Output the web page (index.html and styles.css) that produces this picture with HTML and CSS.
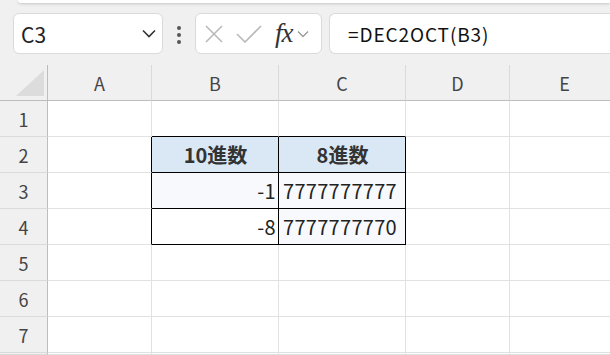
FILE: index.html
```html
<!DOCTYPE html>
<html lang="ja">
<head>
    <meta charset="UTF-8">
    <title>DEC2OCT</title>
    <link rel="stylesheet" href="styles.css">
</head>
<body>

    <div class="ribbon-edge"></div>

    <div class="toolbar">
        <div class="name-box">
            <span>C3</span>
            <svg width="14" height="9" viewBox="0 0 14 9"><path d="M1 1.5 L7 7.5 L13 1.5" fill="none" stroke="#333" stroke-width="1.6"/></svg>
        </div>
        <div class="dots"><i></i><i></i><i></i></div>
        <div class="fn-box">
            <svg width="20" height="20" viewBox="0 0 20 20"><path d="M2 2 L18 18 M18 2 L2 18" fill="none" stroke="#b9b9b9" stroke-width="1.6"/></svg>
            <svg width="26" height="18" viewBox="0 0 26 18"><path d="M1 9 L9 17 L25 1" fill="none" stroke="#b9b9b9" stroke-width="1.6"/></svg>
            <span class="fx">fx</span>
            <svg width="12" height="8" viewBox="0 0 12 8"><path d="M1 1.5 L6 6.5 L11 1.5" fill="none" stroke="#9a9a9a" stroke-width="1.3"/></svg>
        </div>
        <div class="formula">=DEC2OCT(B3)</div>
    </div>

    <div class="sheet">
        <div class="corner"><div class="tri"></div></div>
        <div class="col-head">A</div>
        <div class="col-head">B</div>
        <div class="col-head">C</div>
        <div class="col-head">D</div>
        <div class="col-head">E</div>

        <div class="row-head">1</div>
        <div class="cell"></div>
        <div class="cell edge-b"></div>
        <div class="cell edge-b"></div>
        <div class="cell"></div>
        <div class="cell"></div>

        <div class="row-head">2</div>
        <div class="cell edge-r"></div>
        <div class="cell tb head">10進数</div>
        <div class="cell tb head">8進数</div>
        <div class="cell"></div>
        <div class="cell"></div>

        <div class="row-head">3</div>
        <div class="cell edge-r"></div>
        <div class="cell tb tint num">-1</div>
        <div class="cell tb tint">7777777777</div>
        <div class="cell"></div>
        <div class="cell"></div>

        <div class="row-head">4</div>
        <div class="cell edge-r"></div>
        <div class="cell tb num">-8</div>
        <div class="cell tb tint">7777777770</div>
        <div class="cell"></div>
        <div class="cell"></div>

        <div class="row-head">5</div>
        <div class="cell"></div>
        <div class="cell"></div>
        <div class="cell"></div>
        <div class="cell"></div>
        <div class="cell"></div>

        <div class="row-head">6</div>
        <div class="cell"></div>
        <div class="cell"></div>
        <div class="cell"></div>
        <div class="cell"></div>
        <div class="cell"></div>

        <div class="row-head">7</div>
        <div class="cell"></div>
        <div class="cell"></div>
        <div class="cell"></div>
        <div class="cell"></div>
        <div class="cell"></div>

        <div class="row-head"></div>
        <div class="cell"></div>
        <div class="cell"></div>
        <div class="cell"></div>
        <div class="cell"></div>
        <div class="cell"></div>
    </div>

</body>
</html>
```

FILE: styles.css
```css
* {
    box-sizing: border-box;
}
body {
    margin: 0;
    width: 610px;
    height: 355px;
    overflow: hidden;
    background-color: #f0f0f0;
    font-family: "Noto Sans CJK JP", "Noto Sans", sans-serif;
    color: #222;
}
.ribbon-edge {
    height: 3px;
    margin-left: 18px;
    background-color: #fff;
    border-bottom-left-radius: 6px;
    box-shadow: 0 1px 3px rgba(0, 0, 0, 0.18);
}
.toolbar {
    height: 62px;
    display: flex;
    align-items: flex-start;
    padding: 10px 0 0 13px;
}
.name-box, .fn-box, .formula {
    height: 41px;
    background-color: #fff;
    border: 1px solid #dadada;
    border-radius: 6px;
    display: flex;
    align-items: center;
}
.name-box {
    width: 150px;
    padding: 0 6px 0 7px;
    justify-content: space-between;
    font-size: 21px;
    color: #222;
}
.dots {
    width: 32px;
    display: flex;
    flex-direction: column;
    align-items: center;
    gap: 3px;
    padding-top: 13px;
}
.dots i {
    width: 4px;
    height: 4px;
    border-radius: 50%;
    background-color: #555;
}
.fn-box {
    width: 127px;
    padding: 0 4px 0 8px;
    gap: 12px;
}
.fn-box .fx {
    font-family: "Liberation Serif", serif;
    font-style: italic;
    font-size: 27px;
    color: #333;
    margin-left: 1px;
    margin-right: -8px;
    letter-spacing: -1px;
}
.formula {
    flex: 1;
    margin-left: 7px;
    border-right: none;
    border-radius: 6px 0 0 6px;
    padding-left: 18px;
    font-size: 19px;
    letter-spacing: 0.9px;
    color: #111;
}
.sheet {
    display: grid;
    grid-template-columns: 48px 104px 127px 127px 104px 110px;
    grid-template-rows: repeat(8, 36px) 2px;
}
.corner, .col-head, .row-head {
    background-color: #f0f0f0;
    color: #444;
    font-size: 18px;
    display: flex;
    align-items: center;
    justify-content: center;
}
.corner {
    border-right: 1px solid #bdbdbd;
    border-bottom: 1px solid #bdbdbd;
    padding: 5px 3px 4px 16px;
}
.tri {
    width: 28px;
    height: 26px;
    background-color: #dcdcdc;
    clip-path: polygon(100% 0, 100% 100%, 0 100%);
}
.col-head {
    border-right: 1px solid #dadada;
    border-bottom: 1px solid #bdbdbd;
}
.row-head {
    border-right: 1px solid #bdbdbd;
    border-bottom: 1px solid #dadada;
}
.cell {
    background-color: #fff;
    border-right: 1px solid #e1e1e1;
    border-bottom: 1px solid #e1e1e1;
    font-size: 20px;
    display: flex;
    align-items: center;
    padding: 0 3px 0 4px;
    white-space: nowrap;
    letter-spacing: 0.3px;
}
.cell.edge-b {
    border-bottom-color: #000;
}
.cell.edge-r {
    border-right-color: #000;
}
.cell.tb {
    border-right-color: #000;
    border-bottom-color: #000;
}
.cell.head {
    background-color: #dae8f6;
    justify-content: center;
    font-weight: bold;
    color: #333;
    letter-spacing: 0;
}
.cell.tint {
    background-color: #f7f9fc;
}
.cell.num {
    justify-content: flex-end;
    padding-right: 2px;
}
```
